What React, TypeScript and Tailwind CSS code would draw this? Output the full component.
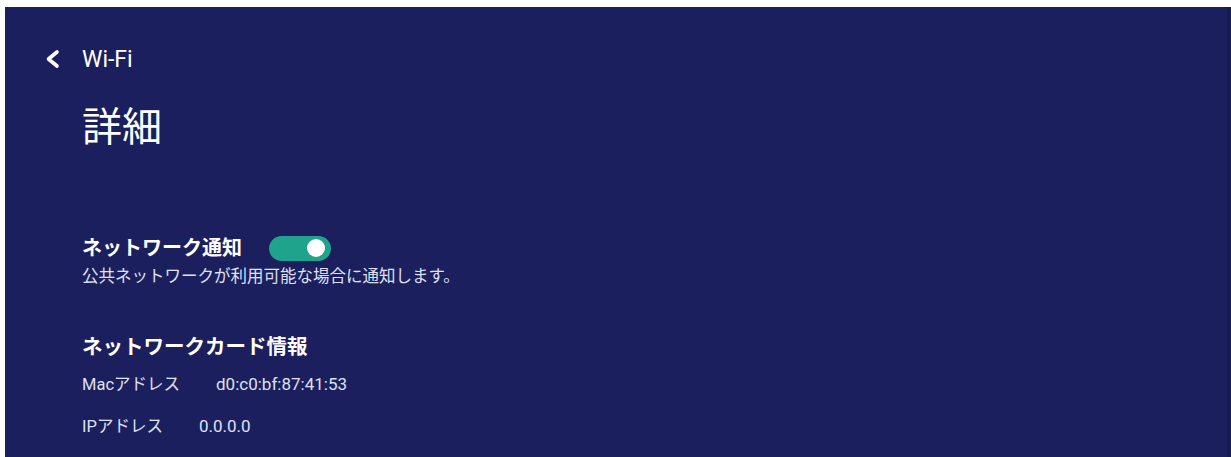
export default function App() {
  return (
    <div
      className="h-screen overflow-hidden bg-white pt-[7px] pl-[5px]"
      style={{ fontFamily: 'Roboto, "Noto Sans CJK JP", sans-serif' }}
    >
      <div className="h-[450px] bg-[#1c1f5e] pt-[36px] text-white border-r-[4px] border-[#181b52]">
        {/* Header */}
        <div className="flex h-[32px] items-center">
          <svg
            className="ml-[37px] h-[20px] w-[20px]"
            viewBox="0 0 20 20"
            fill="none"
            stroke="white"
            strokeWidth="3.6"
            strokeLinecap="round"
            strokeLinejoin="round"
          >
            <polyline points="15,3 6.5,10 15,17" />
          </svg>
          <span className="ml-[20px] text-[23px] leading-none">Wi-Fi</span>
        </div>

        <div className="pl-[77px]">
          <h1 className="mt-[29px] h-[48px] text-[40px] leading-[48px] font-normal">詳細</h1>

          {/* Network notification */}
          <div className="mt-[82px] flex h-[28px] items-center">
            <span className="text-[20px] font-bold leading-none">ネットワーク通知</span>
            <div className="ml-[27px] flex h-[25px] w-[62px] items-center justify-end rounded-full bg-[#1fa38c] pr-[6px]">
              <div className="h-[18px] w-[18px] rounded-full bg-white" />
            </div>
          </div>
          <p className="mt-[4px] h-[22px] text-[16.5px] leading-[22px] text-[#dfe1f0]">
            公共ネットワークが利用可能な場合に通知します。
          </p>

          {/* Network card info */}
          <h2 className="mt-[45px] h-[28px] text-[20.5px] font-bold leading-[28px]">ネットワークカード情報</h2>
          <div className="mt-[13px] flex h-[22px] items-center text-[16.5px] text-[#dfe1f0]">
            <span>Macアドレス</span>
            <span className="ml-[36px] text-[17px]">d0:c0:bf:87:41:53</span>
          </div>
          <div className="mt-[20px] flex h-[22px] items-center text-[16.5px] text-[#dfe1f0]">
            <span>IPアドレス</span>
            <span className="ml-[36px] text-[17px]">0.0.0.0</span>
          </div>
        </div>
      </div>
    </div>
  )
}
